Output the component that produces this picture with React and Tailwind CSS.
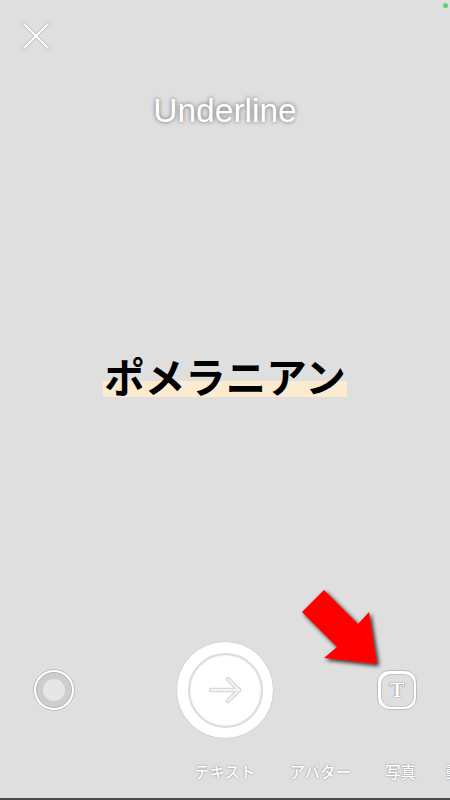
import React from 'react';

const jp = { fontFamily: '"Noto Sans CJK JP", sans-serif' };

const CloseIcon = () => (
  <svg width="30" height="30" viewBox="0 0 30 30" className="block">
    <path d="M3 3 L27 27 M27 3 L3 27" stroke="#b8b8b8" strokeWidth="3.8" strokeLinecap="round" fill="none" />
    <path d="M3 3 L27 27 M27 3 L3 27" stroke="#ffffff" strokeWidth="2.2" strokeLinecap="round" fill="none" />
  </svg>
);

const ArrowIcon = () => (
  <svg width="36" height="30" viewBox="0 0 36 30" className="block">
    <path d="M4 15 H32 M21 4 L32 15 L21 26" stroke="#d2d2d2" strokeWidth="4.4" strokeLinecap="round" strokeLinejoin="round" fill="none" />
    <path d="M4 15 H32 M21 4 L32 15 L21 26" stroke="#f3f3f3" strokeWidth="2.4" strokeLinecap="round" strokeLinejoin="round" fill="none" />
  </svg>
);

const RedArrow = () => (
  <svg width="100" height="90" viewBox="0 0 100 90" className="block">
    <defs>
      <filter id="arrowShadow" x="-20%" y="-20%" width="150%" height="150%">
        <feDropShadow dx="2" dy="2" stdDeviation="2" floodColor="#000000" floodOpacity="0.85" />
      </filter>
    </defs>
    <path d="M24 2 L2 24 L37 59 L24 70 L77 76 L69 24 L58 36 Z" fill="#ff0000" filter="url(#arrowShadow)" />
  </svg>
);

const Label = ({ children, className = '' }) => (
  <span
    className={`text-[15.5px] leading-5 font-medium text-white whitespace-nowrap [text-shadow:0_0_2px_rgba(0,0,0,0.45)] ${className}`}
    style={jp}
  >
    {children}
  </span>
);

export default function App() {
  return (
    <div className="relative w-[450px] h-[800px] overflow-hidden flex flex-col bg-[#dfdfdf]" style={{ fontFamily: '"Liberation Sans", sans-serif' }}>
      {/* status dot */}
      <div className="absolute top-[3px] right-[2px] w-[5px] h-[5px] rounded-full bg-[#5fcf6f]" />

      {/* Top */}
      <div className="pl-[21px] pt-[21px]">
        <CloseIcon />
      </div>
      <h1 className="mt-[40px] text-center text-[33.5px] leading-10 font-normal text-white [text-shadow:0_0_4px_rgba(0,0,0,0.55)]">
        Underline
      </h1>

      {/* Center word */}
      <div className="flex-1 flex justify-center pt-[215px]">
        <span
          className="h-[60px] px-[1.5px] text-[40.5px] leading-[60px] font-bold text-black whitespace-nowrap bg-[linear-gradient(to_bottom,transparent_35px,#fcebcf_35px,#fcebcf_51px,transparent_51px)]"
          style={jp}
        >
          ポメラニアン
        </span>
      </div>

      {/* Controls */}
      <div className="grid grid-cols-[1fr_auto_1fr] items-center px-[33px]">
        <div className="w-[42px] h-[42px] rounded-full bg-white border border-[#bdbdbd] p-[2px]">
          <div className="w-full h-full rounded-full bg-[#cdcdcd] border border-[#b5b5b5] flex items-center justify-center">
            <div className="w-[22px] h-[22px] rounded-full bg-[#e6e6e6]" />
          </div>
        </div>
        <div className="w-[98px] h-[98px] rounded-full bg-white border border-[#d2d2d2] flex items-center justify-center">
          <div className="w-[75px] h-[75px] rounded-full bg-white border-2 border-[#dcdcdc] shadow-[inset_0_0_2px_rgba(0,0,0,0.12)] flex items-center justify-center">
            <ArrowIcon />
          </div>
        </div>
        <div className="justify-self-end w-[40px] h-[40px] rounded-[12px] border border-[#bdbdbd] bg-white p-[2.5px]">
          <div className="w-full h-full rounded-[10px] bg-[#dfdfdf] border border-[#c4c4c4] flex items-center justify-center">
            <span
              className="text-[22px] leading-none font-bold text-white [text-shadow:0_0_1px_rgba(0,0,0,0.9)]"
              style={{ fontFamily: '"Liberation Serif", serif' }}
            >
              T
            </span>
          </div>
        </div>
      </div>

      {/* Tabs */}
      <div className="mt-[22px] mb-[17px] pl-[194px] flex gap-[34px]">
        <Label>テキスト</Label>
        <Label>アバター</Label>
        <Label>写真</Label>
        <Label className="-ml-[4px]">動画</Label>
      </div>
      <div className="h-[2px] bg-[#4a4a4a]" />

      {/* annotation */}
      <div className="absolute left-[300px] top-[588px]">
        <RedArrow />
      </div>
    </div>
  );
}
